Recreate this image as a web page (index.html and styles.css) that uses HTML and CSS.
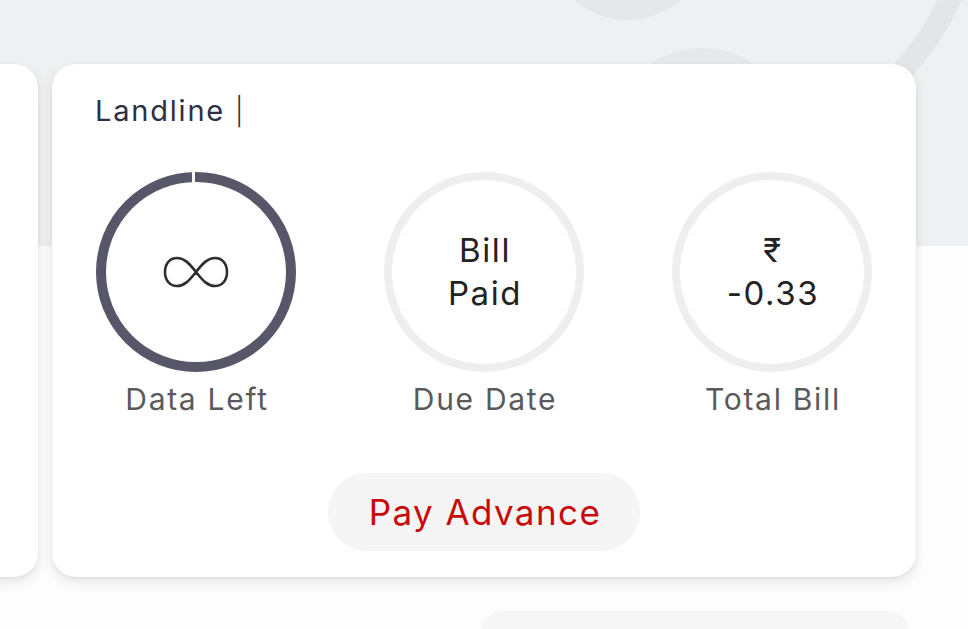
FILE: index.html
```html
<!DOCTYPE html>
<html>
<head>
<meta charset="utf-8">
<link rel="stylesheet" href="styles.css">
</head>
<body>
<div class="page">
  <div class="backdrop">
    <div class="blob blob-top"></div>
    <div class="blob blob-mid"></div>
    <div class="blob blob-ring"></div>
  </div>
  <div class="cards">
    <div class="card card-side"></div>
    <div class="card card-main">
      <div class="title">Landline <span class="bar">|</span></div>
      <div class="stats">
        <div class="stat">
          <div class="ring ring-dark">
            <svg class="gap" width="200" height="200" viewBox="0 0 200 200"><rect x="96" y="0" width="3" height="12" fill="#fff"/></svg>
            <svg class="inf" width="66" height="34" viewBox="0 0 66 34"><path d="M33 17 C26 8 21 3 14 3 C6.5 3 2 9 2 17 C2 25 6.5 31 14 31 C21 31 26 26 33 17 C40 8 45 3 52 3 C59.5 3 64 9 64 17 C64 25 59.5 31 52 31 C45 31 40 26 33 17 Z" fill="none" stroke="#2f2f33" stroke-width="2.6"/></svg>
          </div>
          <div class="label">Data Left</div>
        </div>
        <div class="stat">
          <div class="ring ring-light"><div class="value">Bill<br>Paid</div></div>
          <div class="label">Due Date</div>
        </div>
        <div class="stat">
          <div class="ring ring-light"><div class="value">₹<br>-0.33</div></div>
          <div class="label">Total Bill</div>
        </div>
      </div>
      <div class="actions"><button class="pay">Pay Advance</button></div>
    </div>
  </div>
  <div class="lower"><div class="lower-card"></div></div>
</div>
</body>
</html>
```
FILE: styles.css
```css
html, body { margin: 0; padding: 0; }
body { background: #fdfdfd; font-family: Inter, "Noto Sans", sans-serif; }
.page { position: relative; width: 968px; height: 629px; overflow: hidden; }
.backdrop { position: absolute; left: 0; top: 0; width: 968px; height: 246px; background: #eef0f2; overflow: hidden; }
.blob { position: absolute; border-radius: 50%; }
.blob-top { left: 545px; top: -150px; width: 165px; height: 170px; background: #e6e7e8; }
.blob-mid { left: 612px; top: 48px; width: 180px; height: 180px; background: #e7e8e9; }
.blob-ring { left: 440px; top: -380px; width: 500px; height: 500px; border: 22px solid transparent; border-right-color: #e4e5e6; transform: rotate(14deg); }
.cards { position: relative; display: flex; gap: 14px; padding-top: 64px; margin-left: -162px; }
.card { background: #fff; border-radius: 24px; height: 513px; box-shadow: 0 5px 12px rgba(0,0,0,0.10), 0 1px 3px rgba(0,0,0,0.05); flex: none; box-sizing: border-box; }
.card-side { width: 200px; }
.card-main { width: 864px; padding-top: 28px; display: flex; flex-direction: column; }
.title { padding-left: 43px; font-size: 29px; line-height: 38px; color: #2c2f45; letter-spacing: 1.8px; }
.bar { font-weight: 300; font-size: 27px; }
.stats { display: grid; grid-template-columns: repeat(3, 1fr); margin-top: 41px; }
.stat { display: flex; flex-direction: column; align-items: center; }
.ring { position: relative; width: 200px; height: 200px; box-sizing: border-box; border-radius: 50%; display: flex; align-items: center; justify-content: center; }
.ring-dark { border: 10px solid #585769; }
.ring-light { border: 8px solid #eeeeee; }
.gap { position: absolute; left: -10px; top: -10px; }
.value { font-size: 33px; line-height: 43px; color: #222; text-align: center; letter-spacing: 1.6px; padding-left: 2px; }
.label { margin-top: 8px; font-size: 30px; line-height: 38px; color: #5a5a5c; letter-spacing: 1.7px; padding-left: 2px; }
.actions { display: flex; justify-content: center; margin-top: 55px; }
.pay { width: 312px; height: 78px; border: none; border-radius: 39px; background: #f5f5f5; color: #c80a0a; font-family: Inter, "Noto Sans", sans-serif; font-size: 35px; letter-spacing: 1.4px; padding: 0 0 0 2px; }
.lower { position: relative; display: flex; padding: 34px 58px 0 480px; }
.lower-card { flex: 1; height: 80px; background: #f6f6f6; border-radius: 24px; }
```
